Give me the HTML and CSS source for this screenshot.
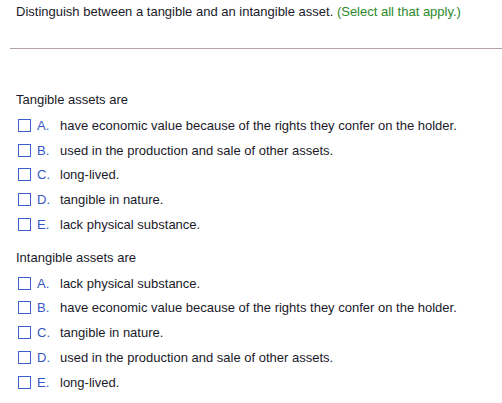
FILE: index.html
```html
<!DOCTYPE html>
<html>
<head>
<meta charset="utf-8">
<link rel="stylesheet" href="styles.css">
</head>
<body>
<div class="question">
  <p class="title">Distinguish between a tangible and an intangible asset. <span class="hint">(Select all that apply.)</span></p>
</div>
<div class="rule"></div>
<div class="group first">
  <p class="prompt">Tangible assets are</p>
  <ul class="options">
    <li class="option"><span class="box"></span><span class="letter">A.</span><span class="text">have economic value because of the rights they confer on the holder.</span></li>
    <li class="option"><span class="box"></span><span class="letter">B.</span><span class="text">used in the production and sale of other assets.</span></li>
    <li class="option"><span class="box"></span><span class="letter">C.</span><span class="text">long-lived.</span></li>
    <li class="option"><span class="box"></span><span class="letter">D.</span><span class="text">tangible in nature.</span></li>
    <li class="option"><span class="box"></span><span class="letter">E.</span><span class="text">lack physical substance.</span></li>
  </ul>
</div>
<div class="group second">
  <p class="prompt">Intangible assets are</p>
  <ul class="options">
    <li class="option"><span class="box"></span><span class="letter">A.</span><span class="text">lack physical substance.</span></li>
    <li class="option"><span class="box"></span><span class="letter">B.</span><span class="text">have economic value because of the rights they confer on the holder.</span></li>
    <li class="option"><span class="box"></span><span class="letter">C.</span><span class="text">tangible in nature.</span></li>
    <li class="option"><span class="box"></span><span class="letter">D.</span><span class="text">used in the production and sale of other assets.</span></li>
    <li class="option"><span class="box"></span><span class="letter">E.</span><span class="text">long-lived.</span></li>
  </ul>
</div>
</body>
</html>
```
FILE: styles.css
```css
html, body {
  margin: 0;
  padding: 0;
  background: #ffffff;
}
body {
  font-family: "Liberation Sans", Arial, sans-serif;
  font-size: 13px;
  color: #1a1a2a;
}
p, ul {
  margin: 0;
  padding: 0;
}
.question {
  padding: 4px 16px 0 16px;
}
.title {
  line-height: 16px;
}
.hint {
  color: #2a8a2a;
}
.rule {
  margin: 28px 0 0 10px;
  height: 1px;
  background: #b4a2aa;
}
.group {
  padding-left: 16px;
}
.group.first {
  margin-top: 37px;
}
.group.second {
  margin-top: 7px;
}
.prompt {
  line-height: 27px;
}
.options {
  list-style: none;
}
.option {
  display: flex;
  align-items: center;
  height: 24.75px;
  padding-left: 2px;
}
.box {
  box-sizing: border-box;
  width: 13px;
  height: 13px;
  border: 1.5px solid #3d5fcf;
  background: #fff;
  flex: none;
}
.letter {
  width: 23px;
  margin-left: 6px;
  color: #3656c6;
  flex: none;
}
.text {
  white-space: nowrap;
}
```
